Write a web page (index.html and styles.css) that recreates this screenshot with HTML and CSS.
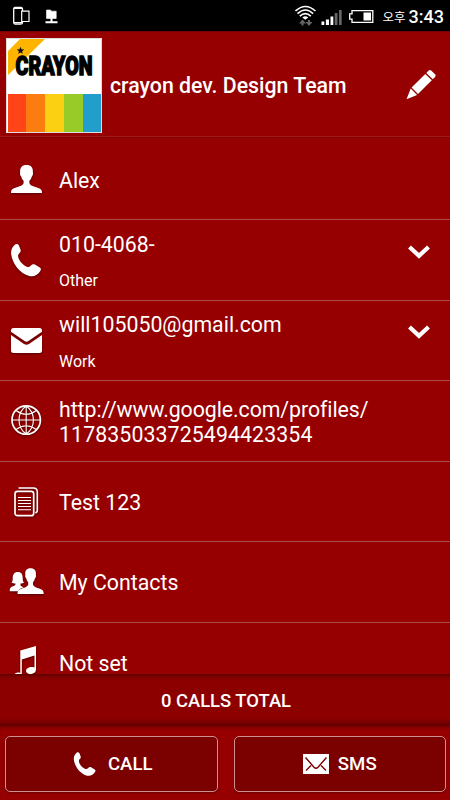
FILE: index.html
```html
<!DOCTYPE html>
<html lang="en">
<head>
<meta charset="utf-8">
<title>Contact</title>
<link rel="stylesheet" href="styles.css">
</head>
<body>
<div class="phone">
  <div class="status">
    <svg class="status-left" width="50" height="22" viewBox="0 0 50 22" fill="none" stroke="#fff">
      <path d="M9.500 6V4q0-1.500-1.500-1.500H2Q.7 2.500.7 4v13.500Q.7 19 2 19h6q1.500 0 1.500-1.500V16" stroke-width="1.300"/>
      <path d="M1 3.500h8M1 17.500h8" stroke-width="1.200"/>
      <path d="M8.700 6.200H16v10.300H8.700z" stroke-width="1.200"/>
      <path d="M33.500 5h4l1 1.200h4.700v7.300h-9.700z" fill="#fff" stroke-width=".6"/>
      <path d="M38.500 13v4M32.500 17.200h12" stroke-width="2"/>
    </svg>
    <svg class="status-right" width="82" height="26" viewBox="0 0 82 26" fill="none">
      <g stroke="#fff" stroke-width="1.600"><path d="M.5 8q9.800-9 20 0M2.500 10.600q8-7.200 15.600 0M4.800 13.200q5.500-5.200 11 0"/></g>
      <path d="M7.300 14.600q3-2.600 6 0L10.300 16.800z" fill="#fff"/>
      <path d="M7.500 22.500v-4M14 17v4" stroke="#666" stroke-width="2"/>
      <path d="M4 20.500l3.500-4 3.500 4zM10.500 19l3.500 4 3.500-4z" fill="#666"/>
      <path d="M26.500 18.500h2.800V22h-2.800zM30.900 16.500H34V22h-3.100zM35.500 13.500h2.800V22h-2.800z" fill="#fff"/>
      <path d="M39.700 10h2.800v12h-2.800zM44 7h2.700v15H44z" fill="#666"/>
      <path d="M57 7.600h20.800v11.800H57v-3.300h-2.300v-5.200H57z" stroke="#fff" stroke-width="1.300"/>
      <path d="M68.500 9.500H76v8h-7.500z" fill="#fff"/>
    </svg>
    <span class="ampm">오후</span><span class="clock">3:43</span>
  </div>

  <header class="header">
    <svg class="avatar" width="96" height="95" viewBox="0 0 96 95">
      <path fill="#fff" d="M0 0h96v95H0z"/>
      <path fill="#ffb400" d="M14 1h25L2 37V13z"/>
      <text class="brand" x="9.500" y="37" textLength="77" lengthAdjust="spacingAndGlyphs">CRAYON</text>
      <path fill="#111" d="M14.500 8.800l1 2.500 2.700.2-2.100 1.700.7 2.600-2.300-1.400-2.300 1.400.7-2.600-2.100-1.700 2.700-.2z"/>
      <path fill="#ff4517" d="M2 56h18v38H2z"/><path fill="#fb7d10" d="M20 56h19v38H20z"/>
      <path fill="#fbd012" d="M39 56h19v38H39z"/><path fill="#98cb27" d="M58 56h19v38H58z"/>
      <path fill="#229ecd" d="M77 56h18v38H77z"/>
      <path fill="none" stroke="#ddd" d="M.5.5h95v94H.5z"/>
    </svg>
    <h1 class="name">crayon dev. Design Team</h1>
    <svg class="edit" width="32" height="32" viewBox="0 0 32 32" fill="#fff">
      <path d="M21.300 4l2.200-2.300q1.400-1.300 2.900 0l3.600 3.600q1.400 1.400 0 2.800L27.800 10.300z"/>
      <path d="M20.300 5l6.500 6.300L13 25l-6.400-6.400z"/><path d="M5.700 19.500l6.400 6.400L1.500 30.300z"/>
    </svg>
  </header>

  <main class="list">
    <div class="row first">
      <svg class="icon" width="36" height="41" viewBox="0 0 36 41"><path d="M18.500 7c4.700 0 6.700 2.500 6.400 7.500.4 1.600-.1 3-1.100 4-.5 2-1.300 3.400-2.400 4.300v2.400c1.300 3.100 6 3.500 9.500 5 2.500 1.100 3.100 2.200 3.100 4.800H3c0-2.600.6-3.700 3.100-4.800 3.500-1.500 8.200-1.900 9.500-5v-2.400c-1.100-.9-1.900-2.300-2.400-4.300-1-1-1.500-2.400-1.100-4C11.800 9.500 13.800 7 18.500 7z"/></svg>
      <div class="text">Alex</div>
    </div>
    <div class="row">
      <svg class="icon" width="36" height="40" viewBox="0 0 36 40"><path d="M7 4.600c1.500-1 2.800-.8 3.700.4l1.700 4.200c.6 1.500.3 2.800-.8 3.700-1.800 1.700-2 3.500-.6 6.300 1.800 3.600 4.200 5.600 7.200 7.200 2 1 3.400.5 4.700-1 1.300-1.300 2.500-1.500 3.900-.9l5 3.100c1.300.9 1.400 2 .5 3.400-2.500 3.900-6.200 6.100-11 5C12 33.800 4.200 23.500 3.100 13.700 2.800 9.800 4.500 6.800 7 4.600z"/></svg>
      <div class="text"><div>010-4068-</div><div class="label">Other</div></div>
      <svg class="chevron" width="24" height="16" viewBox="0 0 24 16"><path d="M2.500 3l9.500 8.800L21.500 3"/></svg>
    </div>
    <div class="row short">
      <svg class="icon" width="36" height="41" viewBox="0 0 36 41"><path d="M5.500 8h26q2.500 0 2.500 2.500v1.300L20.500 21q-2 1.300-4 0L3 11.800v-1.300Q3 8 5.500 8z"/><path d="M3 15l13 9q2.500 1.500 5 0l13-9v16q0 2-2.500 2h-26Q3 33 3 31z"/></svg>
      <div class="text"><div>will105050@gmail.com</div><div class="label low">Work</div></div>
      <svg class="chevron" width="24" height="16" viewBox="0 0 24 16"><path d="M2.500 3l9.500 8.800L21.500 3"/></svg>
    </div>
    <div class="row">
      <svg class="icon line" width="36" height="40" viewBox="0 0 36 40"><circle cx="18.200" cy="19" r="14.200" stroke-width="1.700"/><path d="M18.200 5v28M4 19h28.400M8 9.500q10.200 7.500 20.400 0M8 28.500q10.200-7.500 20.400 0M18.200 5q-7.200 5-7.200 14t7.200 14q7.200-5 7.200-14T18.200 5"/></svg>
      <div class="text"><div class="url">http://www.google.com/profiles/</div><div class="id">117835033725494423354</div></div>
    </div>
    <div class="row short">
      <svg class="icon line" width="36" height="41" viewBox="0 0 36 41"><rect x="7" y="10.300" width="18.700" height="24.400" rx="2.500" stroke-width="1.700"/><path d="M10.500 7h14.800q4 0 4 4v18.500q0 2-2 2.200" stroke-width="1.600"/><path d="M10 16.500h13M10 19.500h13M10 22.500h13M10 25.500h13M10 28.700h13"/></svg>
      <div class="text">Test 123</div>
    </div>
    <div class="row">
      <svg class="icon" width="36" height="40" viewBox="0 0 36 40"><path d="M9.700 10c4 0 5 2.500 5 6.500 0 2 .3 3 1.300 4-1 .8-2 1-3.500 1v2q.8 1 3.300 1.700-4.300 1-5.800 4H1.800q-.6-3 1.700-4.300c2-1 4-1 4-3.400-1.500 0-3-.3-4-1 1-1 1.200-2 1.200-4 0-4 1.500-6.500 5-6.500z"/><path d="M22.500 6.300c4 0 5.800 2.300 5.400 6.500.4 1.500 0 2.800-1 3.600-.4 1.800-1 3-1.900 3.800v2.500c1 2.500 5 3.200 8 4.500 2 .9 2.700 2 2.700 4.800H9.500c0-2.800.7-3.900 2.700-4.800 3-1.300 7-2 8-4.500v-2.500c-.9-.8-1.500-2-1.900-3.800-1-.8-1.400-2.100-1-3.600-.4-4.200 1.200-6.500 5.200-6.500z"/></svg>
      <div class="text high">My Contacts</div>
    </div>
    <div class="row">
      <svg class="icon" width="36" height="40" viewBox="0 0 36 40"><path d="M12.300 7.500L28 3v23.500c0 3-3 4.500-5.800 4.500-2.700 0-4.300-1.400-4.200-3.300.2-2.700 4.500-4.700 8.500-3.200V12.500l-12.700 4V31c0 3-2.500 4.500-5 4.500S5.500 34 6 32c.6-2 3.800-3.200 6.300-2z"/></svg>
      <div class="text high">Not set</div>
    </div>
  </main>

  <div class="total">0 CALLS TOTAL</div>

  <footer class="actions">
    <div class="button">
      <svg class="call-icon" width="24" height="26" viewBox="2 3 33 34" fill="#fff"><path d="M7 4.600c1.500-1 2.800-.8 3.700.4l1.700 4.200c.6 1.500.3 2.800-.8 3.700-1.800 1.700-2 3.500-.6 6.300 1.800 3.600 4.200 5.600 7.200 7.200 2 1 3.400.5 4.700-1 1.300-1.300 2.500-1.500 3.900-.9l5 3.100c1.300.9 1.400 2 .5 3.400-2.500 3.900-6.200 6.100-11 5C12 33.800 4.200 23.500 3.100 13.700 2.800 9.800 4.500 6.800 7 4.600z"/></svg>
      <span>CALL</span>
    </div>
    <div class="button">
      <svg class="sms-icon" width="26" height="20" viewBox="0 0 26 20"><path fill="#fff" d="M0 0h26v20H0z"/><path d="M2.500 3.500L11 13.200q2 2 4 0l8.500-9.700M3 16.500l5-5M23 16.500l-5-5" fill="none" stroke="#7b0000" stroke-width="1.400"/></svg>
      <span>SMS</span>
    </div>
  </footer>
</div>
</body>
</html>
```
FILE: styles.css
```css
* { box-sizing: border-box; }
body { margin: 0; background: #960000; color: #fff; font-family: Roboto, "Noto Sans CJK KR", sans-serif; font-variant-ligatures: none; }
.phone { width: 450px; height: 800px; display: flex; flex-direction: column; overflow: hidden; }
.status { height: 31px; flex: none; background: #000; display: flex; align-items: center; padding: 3px 6px 0 13px; }
.status-left { margin-top: -2px; }
.status-right { margin: -3px 0 0 auto; }
.ampm { width: 26px; margin-left: 6px; font-size: 12.5px; line-height: 20px; white-space: nowrap; font-family: "Noto Sans CJK KR", sans-serif; }
.clock { font-size: 18px; font-weight: 500; line-height: 24px; margin-top: -1px; }
.header { height: 107px; flex: none; display: flex; align-items: center; padding: 1px 13px 0 6px; border-top: 1px solid #7d0000; border-bottom: 1px solid #7d0808; box-shadow: inset 0 -1px #a51818; }
.avatar { flex: none; }
.brand { font-family: Roboto, sans-serif; font-weight: 900; font-size: 26px; fill: #000; stroke: #000; stroke-width: 1.5px; }
.name { margin: 0 0 0 8px; padding-top: 2px; font-size: 21.3px; font-weight: 500; line-height: 24px; white-space: nowrap; }
.edit { margin-left: auto; }
.list { height: 536px; flex: none; overflow: hidden; }
.row { height: 81px; display: flex; align-items: center; padding: 0 19px 0 8px; border-bottom: 1px solid #ad4a4a; }
.row.first { height: 82px; }
.row.short { height: 80px; }
.icon { flex: none; margin-right: 15px; fill: #fff; filter: drop-shadow(0 1px 1px #500000); }
.icon.line { fill: none; stroke: #fff; stroke-width: 1.1px; }
.text { flex: 1; font-size: 21.3px; line-height: 25px; padding-top: 2px; white-space: nowrap; }
.first .text { padding-top: 4px; }
.text.high { padding-top: 1px; }
.url { letter-spacing: -.06px; }
.id { letter-spacing: .1px; }
.label { font-size: 16px; line-height: 20px; margin-top: 14px; }
.label.low { padding-top: 1px; margin-bottom: -1px; }
.chevron { flex: none; margin-top: -17px; fill: none; stroke: #fff; stroke-width: 4.2px; }
.total { height: 52px; flex: none; display: flex; align-items: center; justify-content: center; padding: 0 0 0 2px; font-size: 18.4px; font-weight: 500; background: linear-gradient(#5c0000 0, #800000 3px, #8c0000 7px, #8c0000 44px, #7c0000 48px, #5c0000 52px); }
.actions { flex: 1; display: flex; gap: 16px; padding: 10px 4px 8px 5px; box-shadow: inset 0 3px 3px -1px #780000; }
.button { flex: 1; display: flex; align-items: center; justify-content: center; border: 1px solid #cf8f8f; border-radius: 5px; background: #7b0000; font-size: 18.6px; font-weight: 500; box-shadow: 0 1px 2px #690000; }
.call-icon { margin: 0 11px 0 3px; }
.sms-icon { margin-right: 9px; }
```
